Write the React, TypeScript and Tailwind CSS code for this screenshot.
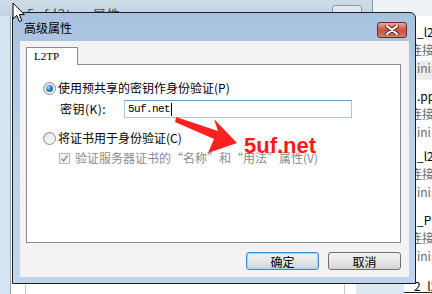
import React from "react";

const cjk = "font-['Noto_Sans_CJK_SC','Noto_Sans',sans-serif]";

function Radio({ checked }: { checked: boolean }) {
  return (
    <span className="relative flex h-[13px] w-[13px] shrink-0 items-center justify-center rounded-full border border-[#8a8c8e] bg-gradient-to-br from-[#d9dadb] to-[#fbfbfb]">
      <span className="h-[9px] w-[9px] rounded-full bg-gradient-to-br from-[#e6e7e8] to-[#f8f8f8] flex items-center justify-center">
        {checked && (
          <span className="h-[7px] w-[7px] rounded-full bg-[radial-gradient(circle_at_35%_35%,#9fd3fb_0%,#2d82cf_45%,#0e4b8c_100%)]" />
        )}
      </span>
    </span>
  );
}

function CloseButton() {
  return (
    <div className="absolute right-[8px] top-[9px] flex h-[16px] w-[30px] items-center justify-center rounded-[3px] border border-[#6b2a22] bg-gradient-to-b from-[#e8a898] via-[#c8503f] to-[#d27b69]">
      <svg width="14" height="10" viewBox="0 0 14 10">
        <path d="M2 1 L12 9 M12 1 L2 9" stroke="#5a2018" strokeWidth="4" strokeLinecap="round" />
        <path d="M2 1 L12 9 M12 1 L2 9" stroke="#ffffff" strokeWidth="2.2" strokeLinecap="round" />
      </svg>
    </div>
  );
}

function Btn({ label, focus }: { label: string; focus?: boolean }) {
  return (
    <div
      className={
        "flex h-[18px] w-[73px] items-center justify-center rounded-[3px] border bg-gradient-to-b from-[#f3f3f3] via-[#e6e6e6] to-[#d4d4d4] text-[12px] text-black leading-none " +
        (focus ? "border-[#3d8ed0] shadow-[inset_0_0_0_1px_#9fd6f6]" : "border-[#707070]")
      }
    >
      <span className="mt-[1px]">{label}</span>
    </div>
  );
}

export default function App() {
  return (
    <div className={"relative h-[294px] w-[432px] overflow-hidden bg-white " + cjk}>
      {/* Background window */}
      <div className="absolute left-0 top-0 h-[16px] w-[373px] border-r border-[#8696a8] bg-gradient-to-b from-[#cfdbe8] to-[#c2d2e4]">
        <span className="absolute left-[27px] top-[7px] text-[13px] leading-none text-[#4a4a4a] tracking-[1px]">5uf.l2tp&nbsp;&nbsp;&nbsp;属性</span>
        <div className="absolute left-[332px] top-[5px] h-[14px] w-[30px] rounded-[3px] border border-[#8d9aab] bg-[#e2e8ef]" />
      </div>
      <div className="absolute left-[373px] top-0 h-[16px] w-[59px] bg-[#eef2f6]" />
      <div className="absolute left-0 top-[16px] h-[278px] w-[10px] bg-[#d6e5f3]" />
      <div className="absolute left-[10px] top-[16px] h-[278px] w-px bg-[#9aa3ad]" />
      <div className="absolute left-[25px] top-[284px] h-[10px] w-px bg-[#c9c9c9]" />
      <div className="absolute left-[344px] top-[284px] h-[10px] w-px bg-[#c9c9c9]" />
      <div className="absolute left-[356px] top-[284px] h-[10px] w-[50px] bg-[#dfe9f4]" />

      {/* Right list */}
      <div className="absolute left-[404px] top-[16px] h-[278px] w-[28px] bg-white text-[12px] leading-none">
        <div className="absolute left-0 top-[45px] h-[19px] w-[28px] bg-[#ececec]" />
        {[0, 64, 124, 188].map((y, i) => (
          <div key={i} className="absolute left-0" style={{ top: y + 10 }}>
            <div className="pl-[13px] text-black">{["_l2tp", ".pptp", "_l2tp", "_PPTP"][i]}</div>
            <div className="mt-[6px] pl-[6px] text-[#6a6a6a]">连接</div>
            <div className="mt-[6px] pl-[13px] text-[#6a6a6a]">iniport</div>
          </div>
        ))}
        <div className="absolute left-[10px] top-[264px] text-black">2_l2tp</div>
        <div className="absolute left-0 top-[276px] h-px w-[28px] bg-[#222]" />
      </div>

      {/* Dialog */}
      <div className="absolute left-[12px] top-[12px] flex h-[272px] w-[404px] flex-col rounded-t-[6px] border border-[#1e1e1e] bg-gradient-to-b from-[#a7c2df] via-[#bdd3eb] to-[#bfd5ee]">
        <div className="relative h-[28px] shrink-0">
          <span className="absolute left-[11px] top-[9px] text-[12px] leading-none text-black">高级属性</span>
          <CloseButton />
        </div>
        <div className="mb-[6px] ml-[7px] mr-[6px] flex flex-1 flex-col bg-[#f4f2f3] pl-[6px] pr-[8px] pt-[6px]">
          <div className="relative z-10 -mb-px flex h-[18px] w-[52px] items-center border border-b-0 border-[#898c95] bg-white pl-[7px] font-['Liberation_Serif',serif] text-[11px] leading-none text-black">
            L2TP
          </div>
          <div className="flex h-[179px] flex-col border border-[#898c95] bg-white pl-[16px] pt-[15px] text-[12px] leading-none text-black">
            <div className="flex h-[16px] items-center">
              <Radio checked />
              <span className="ml-[2px]">使用预共享的密钥作身份验证(P)</span>
            </div>
            <div className="mt-[4px] flex h-[18px] items-center">
              <span className="ml-[17px] w-[64px] tracking-[0.5px]">密钥(K):</span>
              <div className="flex h-[18px] w-[228px] items-center border border-[#a9c8e6] border-t-[#6a97c8] bg-white pl-[3px]">
                <span className="font-['Liberation_Mono',monospace] text-[11px] tracking-[-0.6px]">5uf.net</span>
                <span className="ml-[1px] h-[13px] w-px bg-black" />
              </div>
            </div>
            <div className="mt-[12px] flex h-[16px] items-center">
              <Radio checked={false} />
              <span className="ml-[2px]">将证书用于身份验证(C)</span>
            </div>
            <div className="mt-[4px] flex h-[16px] items-center pl-[16px]">
              <span className="flex h-[11px] w-[11px] items-center justify-center border border-[#b8b8b8] bg-[#f3f3f3]">
                <svg width="9" height="9" viewBox="0 0 9 9">
                  <path d="M1.5 4.5 L3.5 7 L7.5 1.5" stroke="#9a9a9a" strokeWidth="1.6" fill="none" />
                </svg>
              </span>
              <span className="ml-[5px] text-[#8a8a8a]">验证服务器证书的“名称”和“用法”属性(V)</span>
            </div>
          </div>
          <div className="mt-[9px] flex justify-end gap-[9px]">
            <Btn label="确定" focus />
            <Btn label="取消" />
          </div>
        </div>
      </div>

      {/* Annotation */}
      <svg className="pointer-events-none absolute left-0 top-0" width="432" height="294" viewBox="0 0 432 294">
        <polygon
          points="176,117 218,131 214,119 237,143 208,153 214,139 175,122"
          fill="#ff2020"
        />
      </svg>
      <span className="absolute left-[244px] top-[135px] font-['Liberation_Sans',sans-serif] text-[22px] font-bold leading-none text-[#ff1818]">
        5uf.net
      </span>

      {/* Cursor */}
      <svg className="pointer-events-none absolute left-[12px] top-[2px]" width="14" height="22" viewBox="0 0 14 22">
        <path d="M1 1 L1 17 L4.8 13.4 L7.4 19.6 L9.8 18.6 L7.3 12.6 L12.4 12.6 Z" fill="#ffffff" stroke="#000000" strokeWidth="1" />
      </svg>
    </div>
  );
}
